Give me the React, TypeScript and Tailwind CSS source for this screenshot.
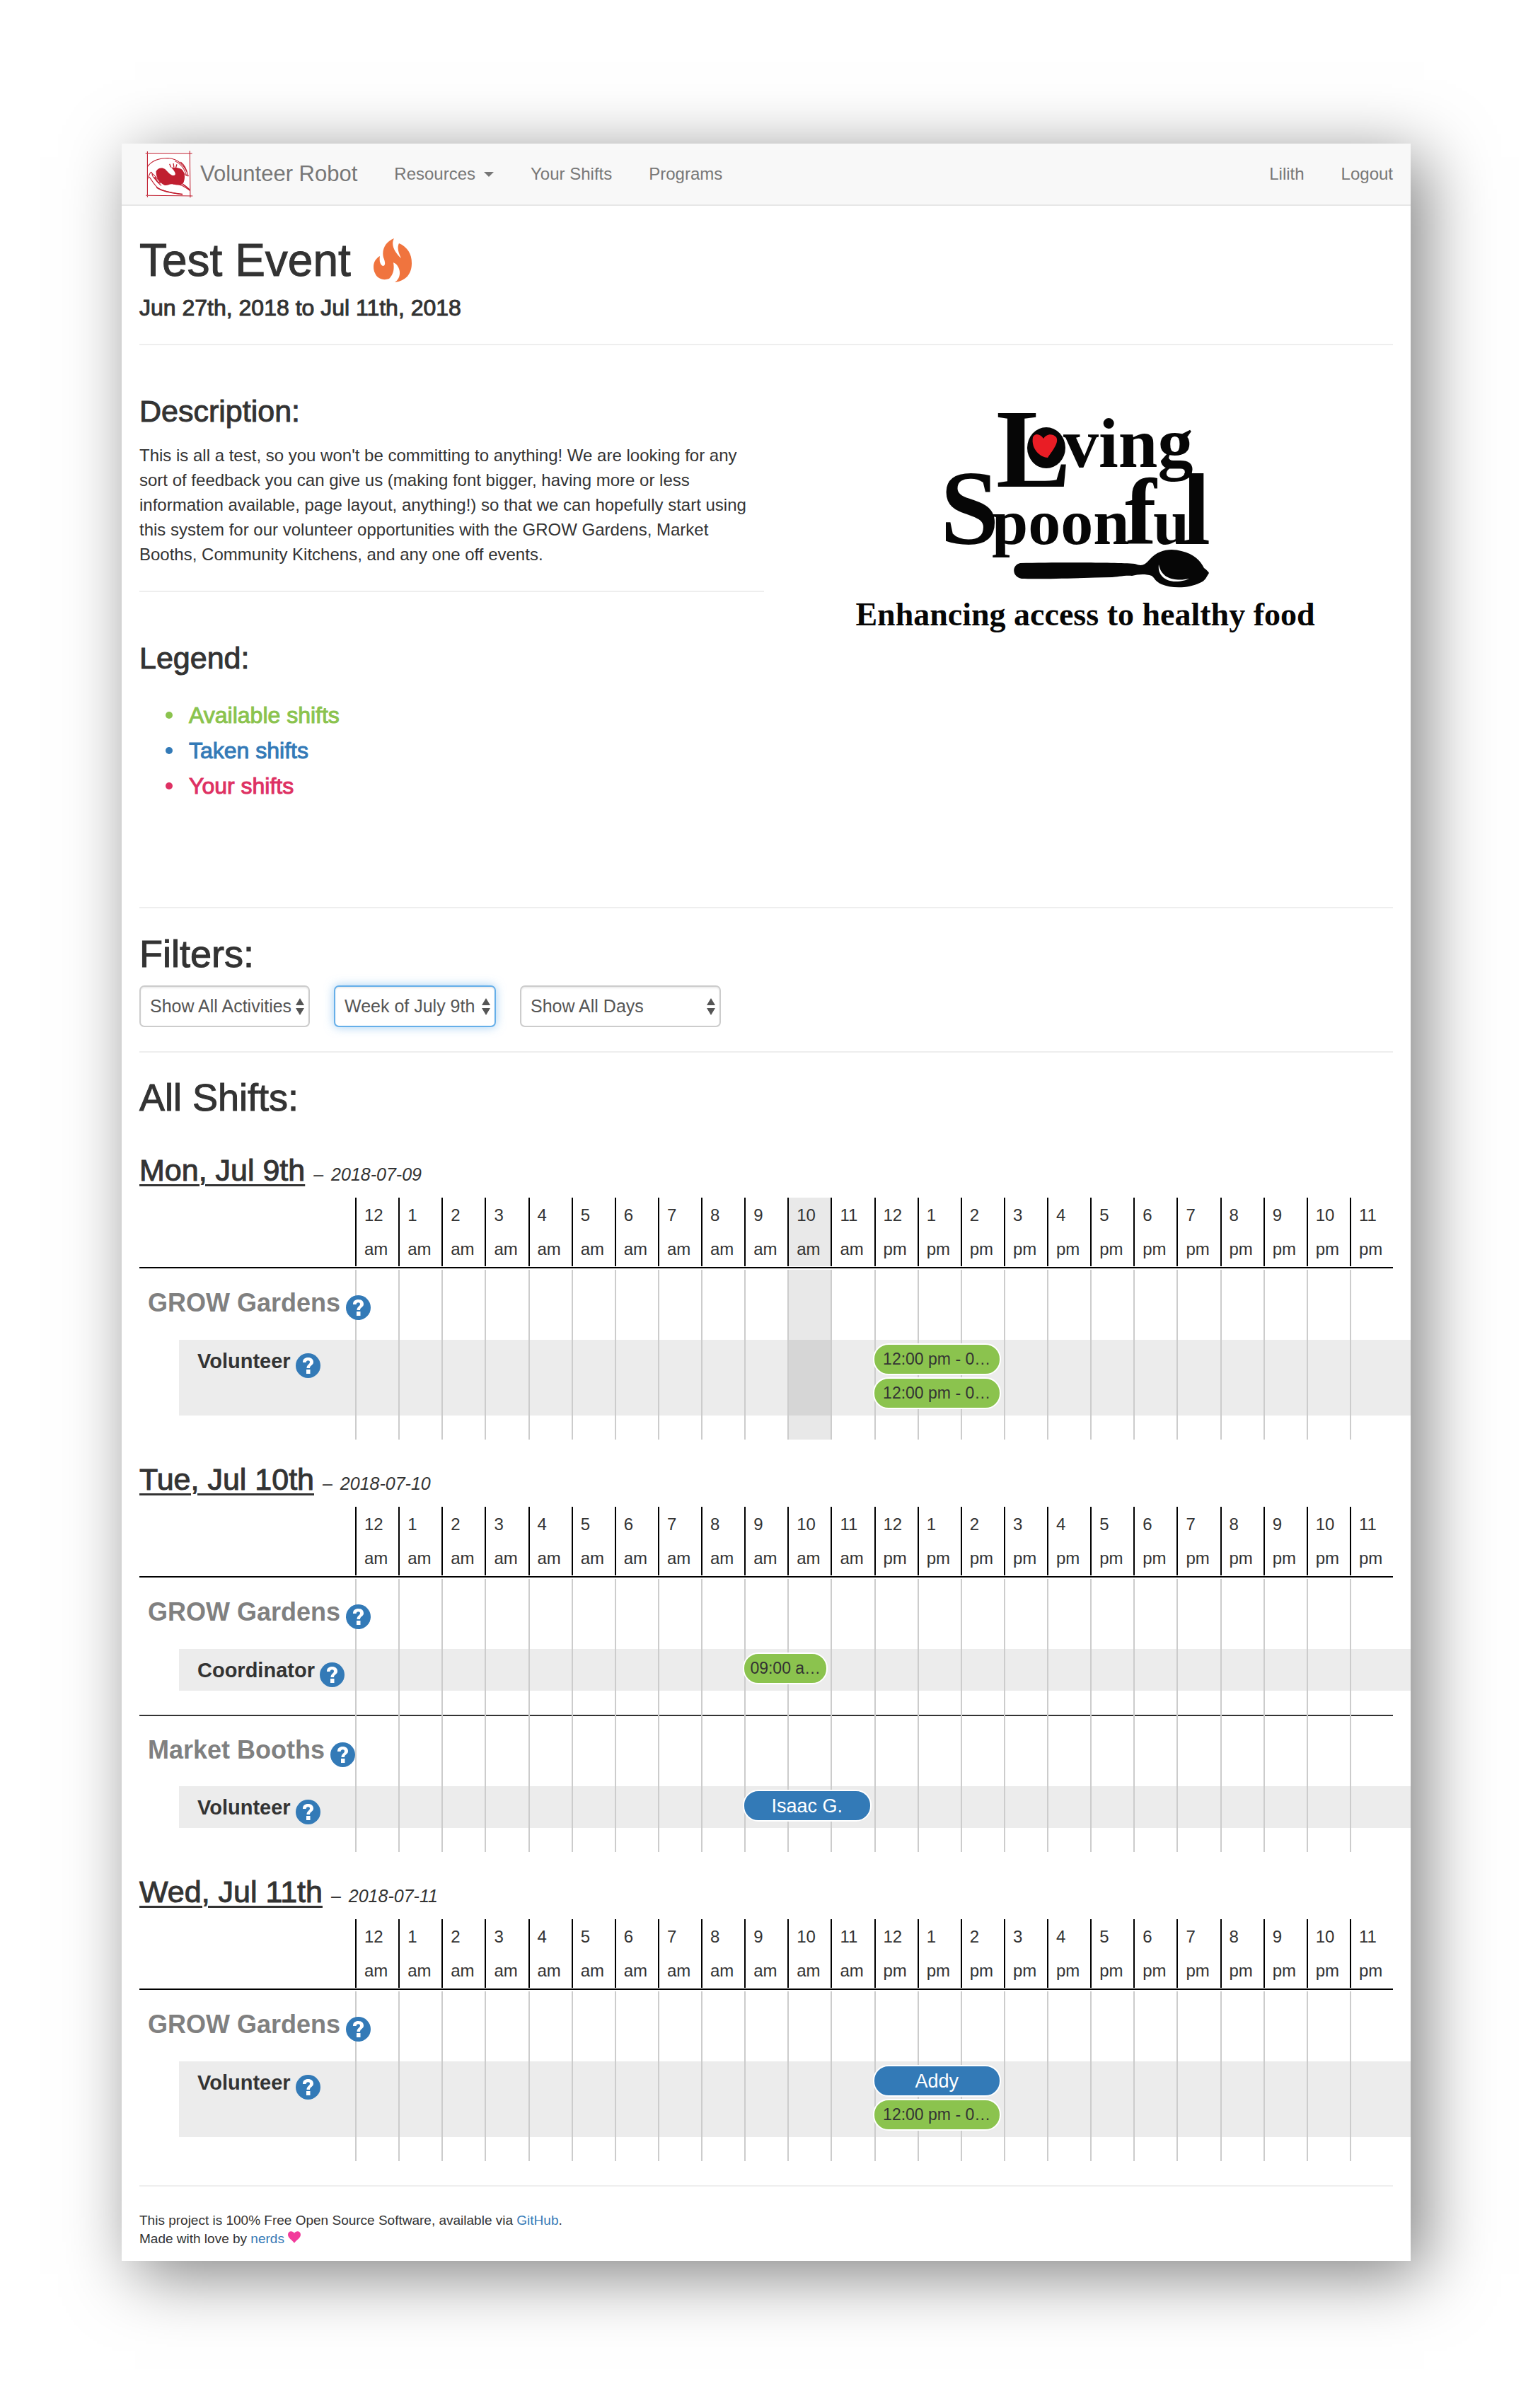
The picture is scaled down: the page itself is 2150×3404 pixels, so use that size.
import React from "react";

type Shift = { start: number; span: number; text: string; title: string; kind: "open" | "taken" };
type Role = { name: string; shifts: Shift[] };
type Activity = { name: string; roles: Role[] };
type Day = { label: string; iso: string; now?: number; activities: Activity[] };

const noon: Shift = { start: 12, span: 3, text: "12:00 pm - 0…", title: "12:00 pm - 03:00 pm", kind: "open" };

const days: Day[] = [
  {
    label: "Mon, Jul 9th",
    iso: "2018-07-09",
    now: 10,
    activities: [{ name: "GROW Gardens", roles: [{ name: "Volunteer", shifts: [noon, noon] }] }],
  },
  {
    label: "Tue, Jul 10th",
    iso: "2018-07-10",
    activities: [
      {
        name: "GROW Gardens",
        roles: [
          {
            name: "Coordinator",
            shifts: [{ start: 9, span: 2, text: "09:00 a…", title: "09:00 am - 11:00 am", kind: "open" }],
          },
        ],
      },
      {
        name: "Market Booths",
        roles: [
          {
            name: "Volunteer",
            shifts: [{ start: 9, span: 3, text: "Isaac G.", title: "09:00 am - 12:00 pm", kind: "taken" }],
          },
        ],
      },
    ],
  },
  {
    label: "Wed, Jul 11th",
    iso: "2018-07-11",
    activities: [
      {
        name: "GROW Gardens",
        roles: [
          {
            name: "Volunteer",
            shifts: [{ start: 12, span: 3, text: "Addy", title: "12:00 pm - 03:00 pm", kind: "taken" }, noon],
          },
        ],
      },
    ],
  },
];

const hours = Array.from({ length: 24 }, (_, h) => ({ n: h % 12 === 0 ? 12 : h % 12, half: h < 12 ? "am" : "pm" }));

const medium = "[-webkit-text-stroke:1px_#333]";

const legendItem = "flex items-center gap-[23px] before:size-2.5 before:rounded-full before:bg-current before:content-['']";

function HandsLogo() {
  return (
    <svg viewBox="0 0 100 100" className="size-[68px] shrink-0" aria-hidden="true" fill="none" stroke="#c01f30">
      <rect x="4" y="5" width="90" height="91" fill="#fff" stroke="none" />
      <path d="M1 6.500L98 7M5 3V98M2 94.500L99 95.500M93 2L94 99" strokeWidth="1.600" />
      <path
        d="M23 44C28 36 36 36 42 40C48 46 54 54 60 53C67 51 60 42 54 36C62 37 72 36 78 42C84 50 83 60 80 68C76 75 66 73 58 71C50 70 46 75 40 73C30 68 22 57 23 44Z"
        fill="#c01f30"
        stroke="none"
      />
      <path d="M54 36L51 29M60 36L59 28M64 37L66 30" strokeWidth="2" />
      <path d="M5 35C14 22 28 17 48 17C70 18 84 34 90 54C84 56 80 46 74 40M62 23C74 28 82 40 86 52M74 25C83 32 87 42 89 52" strokeWidth="1.500" />
      <path d="M5 61C8 55 9 48 13 46C16 46 13 52 17 56C22 62 28 70 34 74M58 71C70 68 84 78 93 84M9 56C15 65 21 75 29 81C40 86 55 89 78 93M14 48C24 56 28 64 32 67" strokeWidth="1.600" />
      <path d="M78 71C84 75 90 79 93 84M24 78C36 86 50 89 78 92M20 56L26 66L32 69" strokeWidth="2.400" />
    </svg>
  );
}

function Flame() {
  return (
    <svg viewBox="0 0 54 63" className="h-[63px] w-[54px]" aria-hidden="true" fill="#f0743e">
      <path d="M29 0C24 9 30 20 39 28C35 20 33 13 36 7C48 12 54 22 54 35C54 50 46 60 30 62C38 57 39 46 34 39C32 35 29 35 28 34C30 45 27 52 22 57C14 60 5 57 2 49C-2 40 0 30 9 25C8 32 9 37 13 39C17 39 17 34 14 27C11 15 18 4 29 0Z" />
    </svg>
  );
}

function SpoonLogo() {
  return (
    <svg
      viewBox="0 0 680 330"
      className="h-auto w-full max-w-[680px]"
      role="img"
      aria-label="Loving Spoonful, enhancing access to healthy food"
      fontFamily='"Liberation Serif", serif'
      fontWeight="700"
      fill="#060606"
    >
      <text x="214" y="118" fontSize="158">L</text>
      <text x="259" y="90" fontSize="100">oving</text>
      <ellipse cx="285" cy="63" rx="27" ry="29" />
      <path
        d="M266 48C269 42 276 43 281 50C284 45 292 41 299 48C303 55 296 64 287 77C278 77 263 66 266 48Z"
        fill="#e91d25"
      />
      <text x="135" y="199" fontSize="150">S</text>
      <text x="208" y="199" fontSize="92">poon</text>
      <text x="396" y="199" fontSize="134">f</text>
      <text x="436" y="199" fontSize="92">u</text>
      <text x="477" y="199" fontSize="144">l</text>
      <path d="M248 226C300 225 380 225 410 227C420 231 424 229 431 221C444 206 462 205 476 209C494 213 503 223 508 233C512 236 514 238 515 240C511 246 510 251 502 254C486 262 462 262 448 256C439 252 438 247 434 244C424 241 415 242 406 244C396 243 384 246 378 246C330 247 280 249 250 248C236 245 236 229 248 226Z" />
      <path d="M444 228C442 242 452 252 468 252C476 252 483 250 487 248C474 251 448 252 444 228Z" fill="#fff" />
      <text x="340" y="314" fontSize="46" textAnchor="middle">Enhancing access to healthy food</text>
    </svg>
  );
}

function Help({ about }: { about: string }) {
  return (
    <button type="button" aria-label={"About " + about} className="relative z-20 mt-[9px] size-[35px] shrink-0">
      <svg viewBox="0 0 35 35" aria-hidden="true">
        <circle cx="17.500" cy="17.500" r="17.500" fill="#337ab7" />
        <path d="M10 13C10 8 13 6 17.500 6C22 6 25 8.500 25 12.500C25 17 20 17 20 21H15.500C15.500 16 20 15.500 20 12.500C20 11 19 10.200 17.500 10.200C15.800 10.200 14.800 11 14.600 13Z" fill="#fff" />
        <rect x="15" y="23" width="5.500" height="6" fill="#fff" />
      </svg>
    </button>
  );
}

function Rule({ className }: { className: string }) {
  return <hr className={"border-0 border-t-2 border-[#eee] " + className} />;
}

function Filter({ label, value, width, focused }: { label: string; value: string; width: string; focused?: boolean }) {
  return (
    <div className={"relative " + width}>
      <select
        aria-label={label}
        defaultValue={value}
        className={
          "h-[59px] w-full appearance-none rounded-[7px] border-2 bg-white pl-[13px] text-[25px] text-[#555] outline-none " +
          (focused
            ? "border-[#66afe9] shadow-[inset_0_2px_2px_rgba(0,0,0,0.075),0_0_14px_rgba(102,175,233,0.6)]"
            : "border-[#ccc] shadow-[inset_0_2px_2px_rgba(0,0,0,0.075)]")
        }
      >
        <option>{value}</option>
      </select>
      <svg viewBox="0 0 12 24" className="pointer-events-none absolute top-[18px] right-2 h-6 w-3" aria-hidden="true" fill="#555">
        <path d="M6 0L12 10H0ZM6 24L0 14H12Z" />
      </svg>
    </div>
  );
}

function Pill({ shift, row }: { shift: Shift; row: number }) {
  return (
    <button
      type="button"
      title={shift.title}
      style={{ gridColumn: `${shift.start + 2} / span ${shift.span}`, gridRow: row }}
      className={
        "z-10 mr-1 -ml-0.5 h-[45px] overflow-hidden rounded-[22px] border-2 border-white text-center whitespace-nowrap " +
        (shift.kind === "open" ? "bg-[#8bc34e] text-[23px] text-[#333]" : "bg-[#337ab7] text-[27px] leading-9 text-white")
      }
    >
      {shift.text}
    </button>
  );
}

function DaySchedule({ day }: { day: Day }) {
  return (
    <section>
      <h3 className="flex items-baseline gap-3 pb-2 text-[43px] leading-[50px] text-[#333]">
        <span className={"underline decoration-[3px] underline-offset-[5px] " + medium}>{day.label}</span>
        <small className="text-[25px]">
          – <em className="ml-1">{day.iso}</em>
        </small>
      </h3>
      <div className="grid grid-cols-[305px_repeat(24,minmax(0,1fr))] border-b-2 border-black pb-px">
        <span />
        {hours.map((h, i) => (
          <div
            key={i}
            className={
              "h-[97px] border-l-2 border-black pt-px pl-[11px] text-2xl leading-[48px] " +
              (day.now === i ? "bg-[#e9e9e9]" : "")
            }
          >
            {h.n}
            <br />
            {h.half}
          </div>
        ))}
      </div>
      <div className="relative">
        {day.activities.map((a, i) => (
          <div key={a.name} className={"pb-[34px] " + (i > 0 ? "border-t-2 border-[#333]" : "")}>
            <h4
              className={
                "flex items-start gap-2 pl-3 text-[36px] leading-[40px] font-bold text-[#808080] " +
                (i > 0 ? "h-[99px] pt-7" : "h-[101px] pt-[29px]")
              }
            >
              {a.name}
              <Help about={a.name} />
            </h4>
            {a.roles.map((r) => (
              <div
                key={r.name}
                className="-mr-[25px] ml-14 grid grid-cols-[249px_repeat(24,minmax(0,1fr))] gap-y-[3px] bg-[#ececec] pt-[5px] pr-[25px] pb-[9px]"
              >
                <h5 className="col-start-1 row-start-1 flex h-[45px] items-start gap-[7px] pt-[5px] pl-[26px] text-[29px] leading-[40px] font-bold text-[#333]">
                  {r.name}
                  <Help about={r.name} />
                </h5>
                {r.shifts.map((s, n) => (
                  <Pill key={n} shift={s} row={n + 1} />
                ))}
              </div>
            ))}
          </div>
        ))}
        <div
          aria-hidden="true"
          className="pointer-events-none absolute inset-x-0 top-0.5 bottom-0 grid grid-cols-[305px_repeat(24,minmax(0,1fr))]"
        >
          <span />
          {hours.map((_, i) => (
            <span key={i} className={"border-l-2 border-[#ccc] " + (day.now === i ? "bg-black/9" : "")} />
          ))}
        </div>
      </div>
    </section>
  );
}

export default function App() {
  return (
    <div className="min-h-screen bg-white pt-[203px] pr-[156px] pb-[204px] pl-[172px] font-['Liberation_Sans',Arial,sans-serif] text-2xl text-[#333]">
      <div className="bg-white shadow-[19px_19px_90px_rgba(0,0,0,0.5)]">
        <nav className="flex h-[88px] items-center border-b-2 border-[#e7e7e7] bg-[#f8f8f8] px-[25px] text-[#777]">
          <a href="#home" className="ml-2 flex items-center gap-2.5 text-[31px]">
            <HandsLogo />
            Volunteer Robot
          </a>
          <button type="button" className="ml-[52px] flex items-center gap-3">
            Resources
            <svg viewBox="0 0 14 7" className="h-[7px] w-3.5" aria-hidden="true" fill="#777">
              <path d="M0 0H14L7 7Z" />
            </svg>
          </button>
          <a href="#shifts" className="ml-[52px]">Your Shifts</a>
          <a href="#programs" className="ml-[52px]">Programs</a>
          <a href="#account" className="ml-auto">Lilith</a>
          <a href="#logout" className="ml-[52px]">Logout</a>
        </nav>

        <main className="px-[25px]">
          <header>
            <div className="flex items-center gap-8 pt-[43px]">
              <h1 className={"text-[64px] leading-[68px] " + medium}>Test Event</h1>
              <Flame />
            </div>
            <h2 className="mt-[15px] text-[32px] leading-9 [-webkit-text-stroke:1px_#333]">Jun 27th, 2018 to Jul 11th, 2018</h2>
          </header>
          <Rule className="mt-[33px]" />

          <div className="grid grid-cols-2 gap-1.5">
            <div>
              <h3 className={"mt-[69px] text-[43px] leading-[48px] " + medium}>Description:</h3>
              <p className="mt-[21px] leading-[35px]">
                This is all a test, so you won't be committing to anything! We are looking for any sort of feedback you
                can give us (making font bigger, having more or less information available, page layout, anything!) so
                that we can hopefully start using this system for our volunteer opportunities with the GROW Gardens,
                Market Booths, Community Kitchens, and any one off events.
              </p>
              <Rule className="mt-[34px]" />
              <h3 className={"mt-[69px] text-[43px] leading-[48px] " + medium}>Legend:</h3>
              <ul className="mt-8 pl-[37px] text-[32px] leading-[50px]">
                <li className={legendItem + " text-[#8bc34e] [-webkit-text-stroke:1px_#8bc34e]"}>Available shifts</li>
                <li className={legendItem + " text-[#337ab7] [-webkit-text-stroke:1px_#337ab7]"}>Taken shifts</li>
                <li className={legendItem + " text-[#de3163] [-webkit-text-stroke:1px_#de3163]"}>Your shifts</li>
              </ul>
            </div>
            <div className="flex items-start justify-center pt-[82px] pl-3">
              <SpoonLogo />
            </div>
          </div>

          <Rule className="mt-[146px]" />
          <h2 className={"mt-[34px] text-[54px] leading-[60px] " + medium}>Filters:</h2>
          <form className="mt-[15px] flex gap-[34px]">
            <Filter label="Activity" value="Show All Activities" width="w-[241px]" />
            <Filter label="Week" value="Week of July 9th" width="w-[229px]" focused />
            <Filter label="Day" value="Show All Days" width="w-[284px]" />
          </form>
          <Rule className="mt-[34px]" />

          <h2 className={"mt-[33px] text-[54px] leading-[60px] " + medium}>All Shifts:</h2>
          <div className="mt-[48px] flex flex-col gap-[31px]">
            {days.map((d) => (
              <DaySchedule key={d.iso} day={d} />
            ))}
          </div>

          <Rule className="mt-[34px]" />
          <footer className="pt-[35px] pb-[18px] text-[19px] leading-[26px]">
            <p>
              This project is 100% Free Open Source Software, available via{" "}
              <a href="#github" className="text-[#337ab7]">GitHub</a>.
            </p>
            <p>
              Made with love by <a href="#nerds" className="text-[#337ab7]">nerds</a>{" "}
              <svg viewBox="0 0 18 17" className="inline h-[17px] w-[18px] align-baseline" role="img" aria-label="love" fill="#f23b9b">
                <path d="M9 17C7 13 0 10 0 5C0 -1 7 -1 9 3C11 -1 18 -1 18 5C18 10 11 13 9 17Z" />
              </svg>
            </p>
          </footer>
        </main>
      </div>
    </div>
  );
}
